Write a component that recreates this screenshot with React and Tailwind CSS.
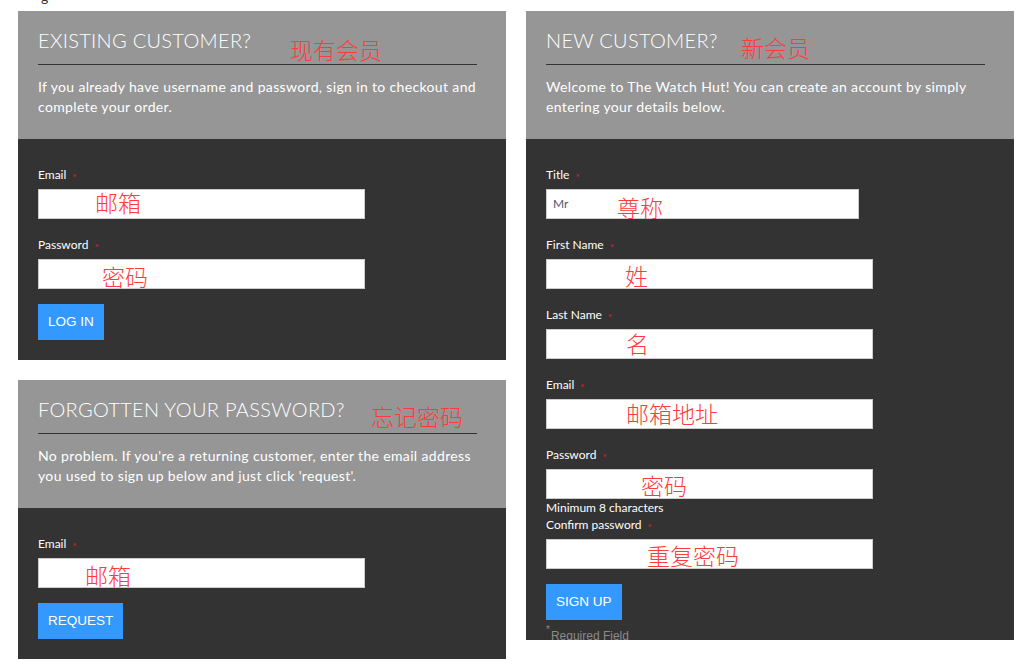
const body = { fontFamily: "Lato, 'Open Sans', sans-serif" };
const cjk = { fontFamily: "'Noto Sans CJK SC', sans-serif" };

function Note({ text, className }) {
  return (
    <span
      style={cjk}
      className={`absolute text-[23px] leading-none font-light text-[#ff3b3b] whitespace-nowrap pointer-events-none ${className}`}
    >
      {text}
    </span>
  );
}

function Header({ title, note, noteClass, children }) {
  return (
    <div className="bg-[#969696] h-[128px] pt-[17px] pl-[20px] pr-[29px] relative">
      <h2 className="text-[20px] leading-[24px] font-light tracking-[0.3px] text-white pb-[12px] border-b border-[#333333]">
        {title}
      </h2>
      <Note text={note} className={noteClass} />
      <p className="mt-[12px] text-[14px] leading-[20px] tracking-[0.35px] text-white">{children}</p>
    </div>
  );
}

function Label({ children }) {
  return (
    <div className="flex items-start h-[14px] text-[12px] leading-[14px] text-white">
      {children}
      <span className="ml-[6px] relative top-[2px] text-[10px] leading-[14px] text-[#e01e1e]">*</span>
    </div>
  );
}

function Field({ label, note, noteClass, width = "w-[327px]", value }) {
  return (
    <div className="mb-[19px]">
      <Label>{label}</Label>
      <div className={`relative mt-[7px] ${width} h-[30px] bg-white border border-[#cccccc] flex items-center pl-[6px]`}>
        {value && <span className="text-[12px] text-[#555a6a]">{value}</span>}
        <Note text={note} className={noteClass} />
      </div>
    </div>
  );
}

function Button({ children }) {
  return (
    <button
      style={{ fontFamily: "'Liberation Sans', Arial, sans-serif" }}
      className="h-[36px] px-[10px] bg-[#3399ff] text-white text-[13.5px] uppercase"
    >
      {children}
    </button>
  );
}

export default function App() {
  return (
    <div style={body} className="w-[1020px] h-[668px] bg-white relative overflow-hidden">
      <span className="absolute left-[41px] top-[-14px] text-[14px] text-[#333]">g</span>
      <div className="flex gap-[20px] pl-[18px] pt-[11px]">
        {/* left column */}
        <div className="w-[488px] flex flex-col gap-[20px]">
          <section>
            <Header title="EXISTING CUSTOMER?" note="现有会员" noteClass="left-[272px] top-[27px]">
              If you already have username and password, sign in to checkout and complete your order.
            </Header>
            <div className="bg-[#333333] pt-[29px] pb-[20px] px-[20px]">
              <Field label="Email" note="邮箱" noteClass="left-[56px] top-[1px]" />
              <Field label="Password" note="密码" noteClass="left-[63px] top-[5px]" />
              <div className="-mt-[4px]">
                <Button>Log in</Button>
              </div>
            </div>
          </section>

          <section>
            <Header title="FORGOTTEN YOUR PASSWORD?" note="忘记密码" noteClass="left-[353px] top-[25px]">
              No problem. If you're a returning customer, enter the email address you used to sign up below and just click 'request'.
            </Header>
            <div className="bg-[#333333] pt-[29px] pb-[20px] px-[20px]">
              <Field label="Email" note="邮箱" noteClass="left-[46px] top-[5px]" />
              <div className="-mt-[4px]">
                <Button>Request</Button>
              </div>
            </div>
          </section>
        </div>

        {/* right column */}
        <section className="w-[488px]">
          <Header title="NEW CUSTOMER?" note="新会员" noteClass="left-[215px] top-[25px]">
            Welcome to The Watch Hut! You can create an account by simply entering your details below.
          </Header>
          <div className="bg-[#333333] h-[501px] overflow-hidden pt-[29px] px-[20px]">
            <Field label="Title" note="尊称" noteClass="left-[70px] top-[6px]" width="w-[313px]" value="Mr" />
            <Field label="First Name" note="姓" noteClass="left-[78px] top-[4px]" />
            <Field label="Last Name" note="名" noteClass="left-[79px] top-[2px]" />
            <Field label="Email" note="邮箱地址" noteClass="left-[79px] top-[2px]" />
            <div>
              <Label>Password</Label>
              <div className="relative mt-[7px] w-[327px] h-[30px] bg-white border border-[#cccccc]">
                <Note text="密码" className="left-[94px] top-[4px]" />
              </div>
              <div className="mt-[2px] mb-[3px] text-[12px] leading-[14px] text-white">Minimum 8 characters</div>
            </div>
            <Field label="Confirm password" note="重复密码" noteClass="left-[100px] top-[4px]" />
            <div className="-mt-[4px]">
              <Button>Sign up</Button>
            </div>
            <div
              style={{ fontFamily: "'Liberation Sans', Arial, sans-serif" }}
              className="mt-[5px] flex items-start text-[12px] leading-[16px] text-[#8a8a8a]"
            >
              <span className="text-[10px] leading-[10px] mr-[1px]">*</span>
              <span className="mt-[3px]">Required Field</span>
            </div>
          </div>
        </section>
      </div>
    </div>
  );
}
